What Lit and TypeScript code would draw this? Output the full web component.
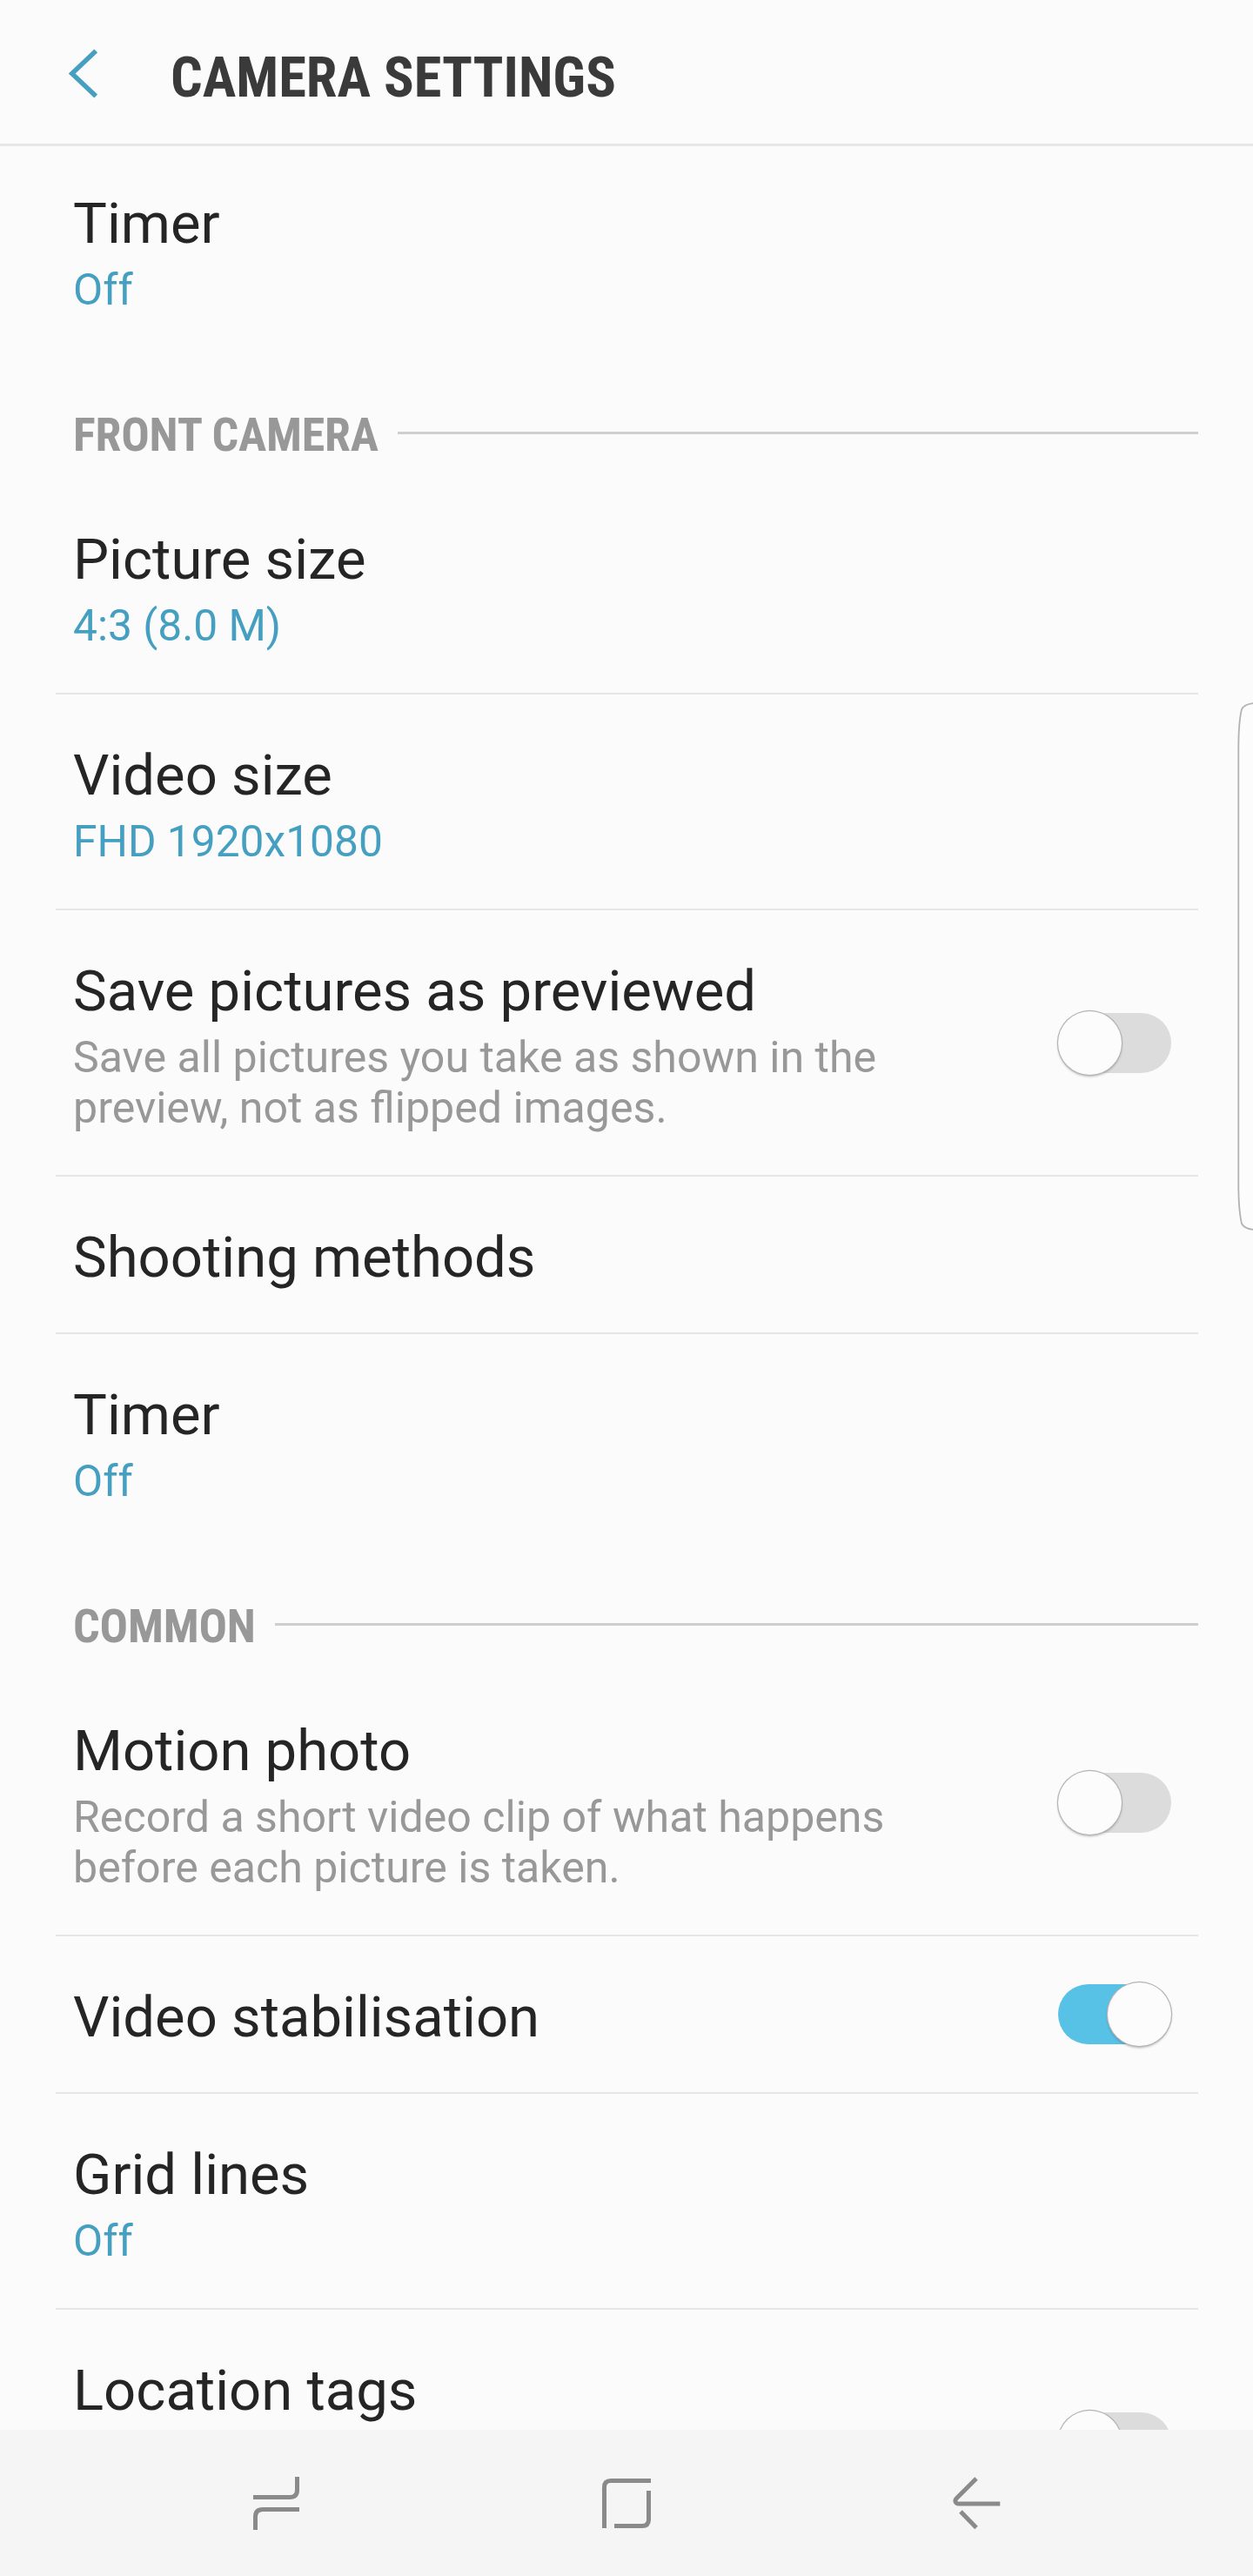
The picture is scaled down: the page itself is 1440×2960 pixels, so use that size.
import { LitElement, html, css, nothing } from "lit";
import { customElement, property } from "lit/decorators.js";

interface Item {
  title: string;
  value?: string;
  note?: string[];
  toggle?: "on" | "off";
  tall?: boolean;
}

interface Group {
  heading?: string;
  items: Item[];
}

const GROUPS: Group[] = [
  { items: [{ title: "Timer", value: "Off" }] },
  {
    heading: "FRONT CAMERA",
    items: [
      { title: "Picture size", value: "4:3 (8.0 M)" },
      { title: "Video size", value: "FHD 1920x1080" },
      {
        title: "Save pictures as previewed",
        note: ["Save all pictures you take as shown in the", "preview, not as flipped images."],
        toggle: "off",
      },
      { title: "Shooting methods" },
      { title: "Timer", value: "Off" },
    ],
  },
  {
    heading: "COMMON",
    items: [
      {
        title: "Motion photo",
        note: ["Record a short video clip of what happens", "before each picture is taken."],
        toggle: "off",
      },
      { title: "Video stabilisation", toggle: "on" },
      { title: "Grid lines", value: "Off" },
      { title: "Location tags", toggle: "off", tall: true },
    ],
  },
];

@customElement("toggle-switch")
class ToggleSwitch extends LitElement {
  @property({ type: Boolean, reflect: true }) on = false;

  static styles = css`
    :host { display: block; flex: none; }
    .track {
      display: flex;
      align-items: center;
      box-sizing: border-box;
      width: 130px;
      height: 69px;
      border-radius: 35px;
      background: #dcdcdc;
    }
    .track.on { background: #58c1e6; justify-content: flex-end; }
    .knob {
      flex: none;
      width: 73px;
      height: 73px;
      border-radius: 50%;
      background: #fcfcfc;
      box-shadow: 0 0 0 1.2px #b4b4b4, 0 2px 3px rgba(0, 0, 0, 0.3);
    }
  `;

  render() {
    return html`<div class="track ${this.on ? "on" : ""}"><div class="knob"></div></div>`;
  }
}

@customElement("app-root")
class AppRoot extends LitElement {
  static styles = css`
    :host {
      display: block;
      font-family: Roboto, "Liberation Sans", sans-serif;
    }
    .screen {
      position: relative;
      display: flex;
      flex-direction: column;
      width: 1440px;
      height: 2960px;
      overflow: hidden;
      background: #fbfbfb;
    }
    .header {
      flex: none;
      display: flex;
      align-items: center;
      box-sizing: border-box;
      height: 168px;
      padding-left: 76px;
      border-bottom: 3px solid #e6e6e6;
    }
    .back { display: block; flex: none; }
    .header-title {
      margin: 12px 0 0 80px;
      font-family: "Roboto Condensed", Roboto, sans-serif;
      font-stretch: 75%;
      font-size: 64.5px;
      line-height: 76px;
      font-weight: 700;
      color: #3a3a3a;
      white-space: nowrap;
    }
    .body { flex: 1; min-height: 0; overflow: hidden; }
    .list { margin-top: -4px; padding: 0 63px 0 64px; }
    .heading {
      display: flex;
      align-items: flex-start;
      height: 82px;
      padding: 58px 0 0 20px;
    }
    .heading-text {
      font-family: "Roboto Condensed", Roboto, sans-serif;
      font-stretch: 75%;
      font-size: 54px;
      line-height: 64px;
      letter-spacing: -0.2px;
      font-weight: 700;
      color: #989898;
      white-space: nowrap;
    }
    .heading-rule { flex: 1; height: 3px; margin: 28px 0 0 22px; background: #cfcfcf; }
    .row {
      display: flex;
      align-items: center;
      justify-content: space-between;
      padding: 55px 31px 48px 20px;
    }
    .row.switch { padding-top: 0; padding-bottom: 0; }
    .row.switch .texts { padding: 55px 0 48px; }
    .row.divided { border-bottom: 2px solid #e6e6e6; }
    .row.tall { height: 304px; }
    .row.tall .texts { align-self: flex-start; }
    .title { font-size: 65.2px; line-height: 76px; color: #252525; white-space: nowrap; }
    .value, .note { margin-top: 9px; line-height: 58px; white-space: nowrap; }
    .value { font-size: 49.7px; color: #459fc1; }
    .note { font-size: 50.1px; color: #989898; }
    .nav {
      flex: none;
      height: 168px;
      background: #f5f5f5;
    }
    .nav-icons { display: block; }
    .edge { position: absolute; right: 0; top: 800px; }
  `;

  private item(it: Item, last: boolean) {
    return html`
      <div class="row ${it.toggle ? "switch" : ""} ${last ? "" : "divided"} ${it.tall ? "tall" : ""}">
        <div class="texts">
          <div class="title">${it.title}</div>
          ${it.value ? html`<div class="value">${it.value}</div>` : nothing}
          ${it.note ? html`<div class="note">${it.note.map((l) => html`<div>${l}</div>`)}</div>` : nothing}
        </div>
        ${it.toggle ? html`<toggle-switch ?on=${it.toggle === "on"}></toggle-switch>` : nothing}
      </div>
    `;
  }

  render() {
    return html`
      <div class="screen">
        <div class="header">
          <svg class="back" width="40" height="62" viewBox="0 0 40 62" fill="none" stroke="#459fc1" stroke-width="5.4">
            <path d="M34.2 6.500 L6.700 32.500 L34.200 58.500" />
          </svg>
          <div class="header-title">CAMERA SETTINGS</div>
        </div>
        <div class="body">
          <div class="list">
            ${GROUPS.map(
              (g) => html`
                ${g.heading
                  ? html`<div class="heading"><span class="heading-text">${g.heading}</span><span class="heading-rule"></span></div>`
                  : nothing}
                ${g.items.map((it, i) => this.item(it, i === g.items.length - 1))}
              `
            )}
          </div>
        </div>
        <div class="nav">
          <svg class="nav-icons" width="1440" height="168" viewBox="0 2792 1440 168" fill="none" stroke="#8a8a8a" stroke-width="5">
            <path d="M291 2869.5 H333 Q341.5 2869.5 341.5 2861 V2846" />
            <path d="M344 2883.5 H302 Q293.5 2883.5 293.5 2892 V2907" />
            <path d="M748 2850.5 H702 Q694.5 2850.5 694.5 2858 V2905" />
            <path d="M706 2902.5 H738 Q745.5 2902.5 745.5 2895 V2862" />
            <path d="M1122 2848 L1099.500 2870.500 C1096.500 2873.500 1098 2877 1102 2877 H1149.300" />
            <path d="M1104 2886 L1122 2904.500" />
          </svg>
        </div>
        <svg class="edge" width="20" height="620" viewBox="1420 800 20 620" fill="none" stroke="#b2b2b2" stroke-width="1.8">
          <path d="M1441 808 Q1430 809 1427 815 Q1423.300 830 1423.300 862 V1360 Q1423.300 1390 1427 1406 Q1430 1412 1441 1413" fill="#fcfcfc" />
        </svg>
      </div>
    `;
  }
}
